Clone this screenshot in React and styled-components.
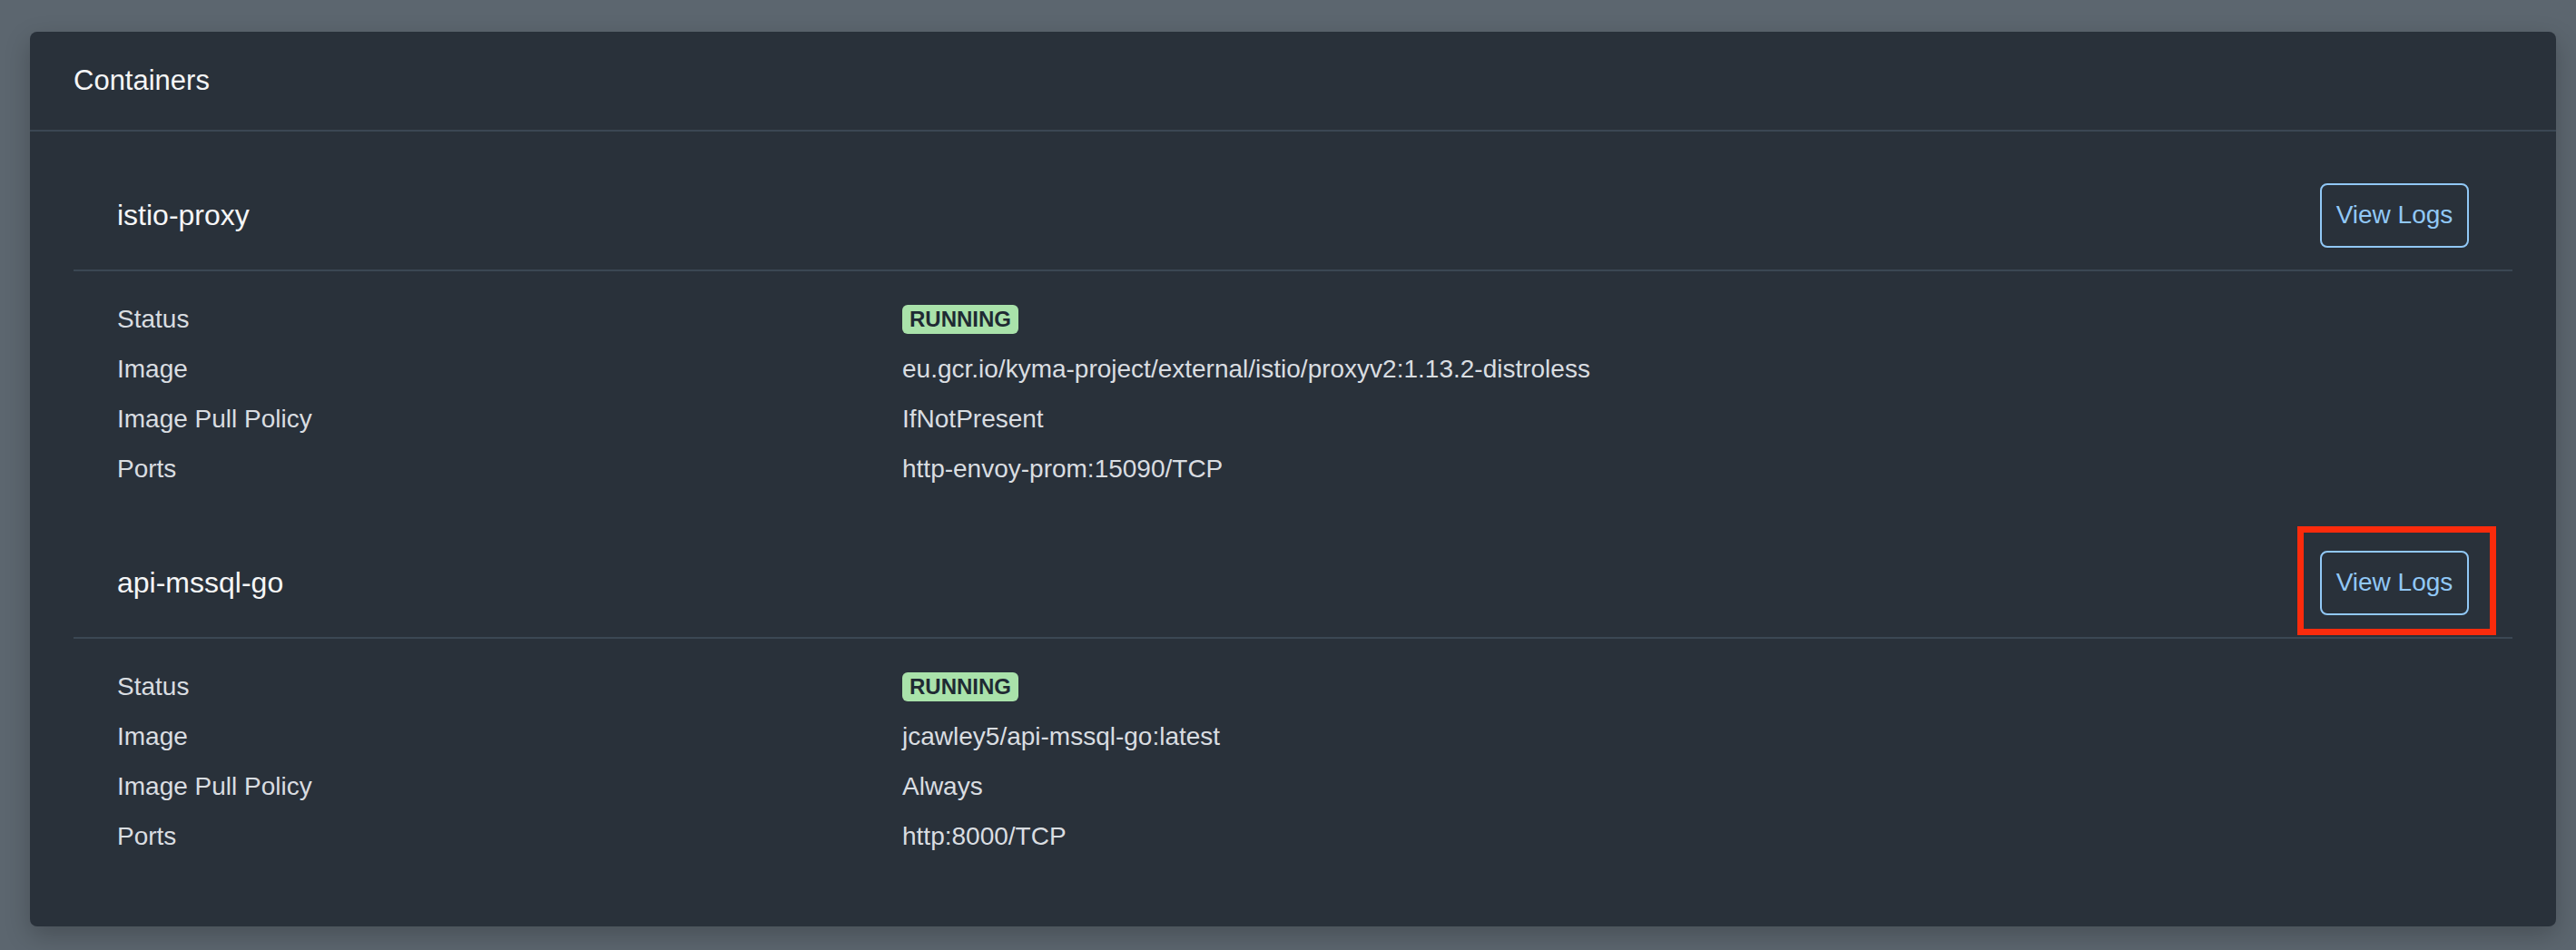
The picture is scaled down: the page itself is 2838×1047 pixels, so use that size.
import React from "react";
import styled, { createGlobalStyle } from "styled-components";

const GlobalStyle = createGlobalStyle`
  html, body {
    margin: 0;
    padding: 0;
    background: #5c666f;
    font-family: "Liberation Sans", Arial, sans-serif;
  }
  * { box-sizing: border-box; }
`;

const Page = styled.div`
  padding: 35px 22px 26px 33px;
  min-height: 1047px;
`;

const Card = styled.section`
  background: #29313a;
  border-radius: 8px;
  box-shadow: 0 10px 28px rgba(0, 0, 0, 0.22);
  padding-bottom: 66px;
`;

const CardHeader = styled.header`
  height: 110px;
  display: flex;
  align-items: center;
  padding: 0 48px;
  border-bottom: 2px solid #3b4753;
  color: #f5f6f7;
  font-size: 31px;
`;

const Block = styled.div`
  padding: 32px 48px 6px;
`;

const TitleRow = styled.div`
  height: 122px;
  display: flex;
  align-items: center;
  justify-content: space-between;
  padding: 0 48px;
  border-bottom: 2px solid #3b4753;
`;

const Title = styled.h3`
  margin: 0;
  font-weight: 400;
  font-size: 32px;
  color: #f5f6f7;
`;

const ButtonWrap = styled.div`
  position: relative;
  display: flex;
`;

const OutlineButton = styled.button`
  width: 164px;
  height: 71px;
  border: 2px solid #91c8f6;
  border-radius: 8px;
  background: transparent;
  color: #91c8f6;
  font-family: "Liberation Sans", Arial, sans-serif;
  font-size: 28px;
  padding: 0;
  cursor: pointer;
`;

const Highlight = styled.span`
  position: absolute;
  top: -27px;
  left: -25px;
  right: -30px;
  bottom: -22px;
  border: 7px solid #fb2b0c;
  pointer-events: none;
`;

const List = styled.dl`
  margin: 0;
  padding: 25px 48px 0;
  display: grid;
  grid-template-columns: 865px 1fr;
  grid-auto-rows: 55px;
  font-size: 28px;
  color: #d9dde1;
`;

const Label = styled.dt`
  display: flex;
  align-items: center;
  line-height: 55px;
`;

const Value = styled.dd`
  margin: 0;
  display: flex;
  align-items: center;
  line-height: 55px;
`;

const Badge = styled.span`
  display: inline-flex;
  align-items: center;
  height: 32px;
  padding: 0 8px;
  border-radius: 6px;
  background: #a9e2aa;
  color: #1f2a33;
  font-weight: 700;
  font-size: 24px;
  line-height: 32px;
`;

const containers = [
  {
    name: "istio-proxy",
    image: "eu.gcr.io/kyma-project/external/istio/proxyv2:1.13.2-distroless",
    policy: "IfNotPresent",
    ports: "http-envoy-prom:15090/TCP",
    highlighted: false,
  },
  {
    name: "api-mssql-go",
    image: "jcawley5/api-mssql-go:latest",
    policy: "Always",
    ports: "http:8000/TCP",
    highlighted: true,
  },
];

function ContainerBlock({ c }) {
  return (
    <Block>
      <TitleRow>
        <Title>{c.name}</Title>
        <ButtonWrap>
          <OutlineButton>View Logs</OutlineButton>
          {c.highlighted && <Highlight />}
        </ButtonWrap>
      </TitleRow>
      <List>
        <Label>Status</Label>
        <Value>
          <Badge>RUNNING</Badge>
        </Value>
        <Label>Image</Label>
        <Value>{c.image}</Value>
        <Label>Image Pull Policy</Label>
        <Value>{c.policy}</Value>
        <Label>Ports</Label>
        <Value>{c.ports}</Value>
      </List>
    </Block>
  );
}

export default function App() {
  return (
    <>
      <GlobalStyle />
      <Page>
        <Card>
          <CardHeader>Containers</CardHeader>
          {containers.map((c) => (
            <ContainerBlock key={c.name} c={c} />
          ))}
        </Card>
      </Page>
    </>
  );
}
